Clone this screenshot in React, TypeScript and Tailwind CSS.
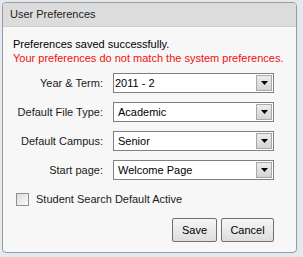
import React from "react";

const font = { fontFamily: '"Liberation Sans", Arial, sans-serif' };

function Select({ value, first }: { value: string; first?: boolean }) {
  return (
    <div className="flex h-[20px] w-[161px] items-stretch border border-[#7f7f7f] bg-white">
      <div className={`flex flex-1 items-center text-[11px] text-black ${first ? "pl-[1px]" : "pl-[4px]"}`}>
        {value}
      </div>
      <div className="my-[1px] mr-[1px] flex w-[16px] items-center justify-center border border-[#a8a8a8] bg-gradient-to-b from-[#ececec] to-[#d4d4d4]">
        <svg width="7" height="4" viewBox="0 0 7 4">
          <path d="M0 0h7L3.5 4z" fill="#000" />
        </svg>
      </div>
    </div>
  );
}

function Row({ label, value, first }: { label: string; value: string; first?: boolean }) {
  return (
    <div className="flex items-center gap-[10px]">
      <div className="w-[90px] text-right text-[11px] text-[#1a1a1a]">{label}</div>
      <Select value={value} first={first} />
    </div>
  );
}

export default function App() {
  return (
    <div className="h-[257px] w-[303px] bg-[#e2e9f0] pl-[2px] pt-[2px]" style={font}>
      <div className="flex h-[251px] w-[295px] flex-col overflow-hidden rounded-[4px] border border-[#9a9a9a] bg-[#f7f7f7]">
        <div className="flex h-[24px] items-center border-b border-[#d0d0d0] bg-[#dcdcdc] pl-[7px] text-[11px] text-[#222]">
          User Preferences
        </div>
        <div className="flex flex-col px-[10px] pt-[10px]">
          <div className="text-[11px] leading-[14px] text-black">Preferences saved successfully.</div>
          <div className="whitespace-nowrap text-[11px] leading-[14px] text-[#f01010]">
            Your preferences do not match the system preferences.
          </div>
          <div className="mt-[8px] flex flex-col gap-[9px]">
            <Row label="Year & Term:" value="2011 - 2" first />
            <Row label="Default File Type:" value="Academic" />
            <Row label="Default Campus:" value="Senior" />
            <Row label="Start page:" value="Welcome Page" />
          </div>
          <div className="mt-[13px] flex items-center gap-[7px] pl-[3px]">
            <div className="h-[13px] w-[13px] border border-[#8f8f8f] bg-gradient-to-br from-[#dcdcdc] to-[#fbfbfb]" />
            <span className="text-[11px] leading-[13px] text-[#1a1a1a]">Student Search Default Active</span>
          </div>
          <div className="mt-[12px] flex justify-end gap-[4px] pr-[12px]">
            <button className="h-[24px] w-[45px] rounded-[2px] border border-[#707070] bg-gradient-to-b from-[#f6f6f6] to-[#dddddd] text-[11px] text-black">
              Save
            </button>
            <button className="h-[24px] w-[53px] rounded-[2px] border border-[#707070] bg-gradient-to-b from-[#f6f6f6] to-[#dddddd] text-[11px] text-black">
              Cancel
            </button>
          </div>
        </div>
      </div>
    </div>
  );
}
